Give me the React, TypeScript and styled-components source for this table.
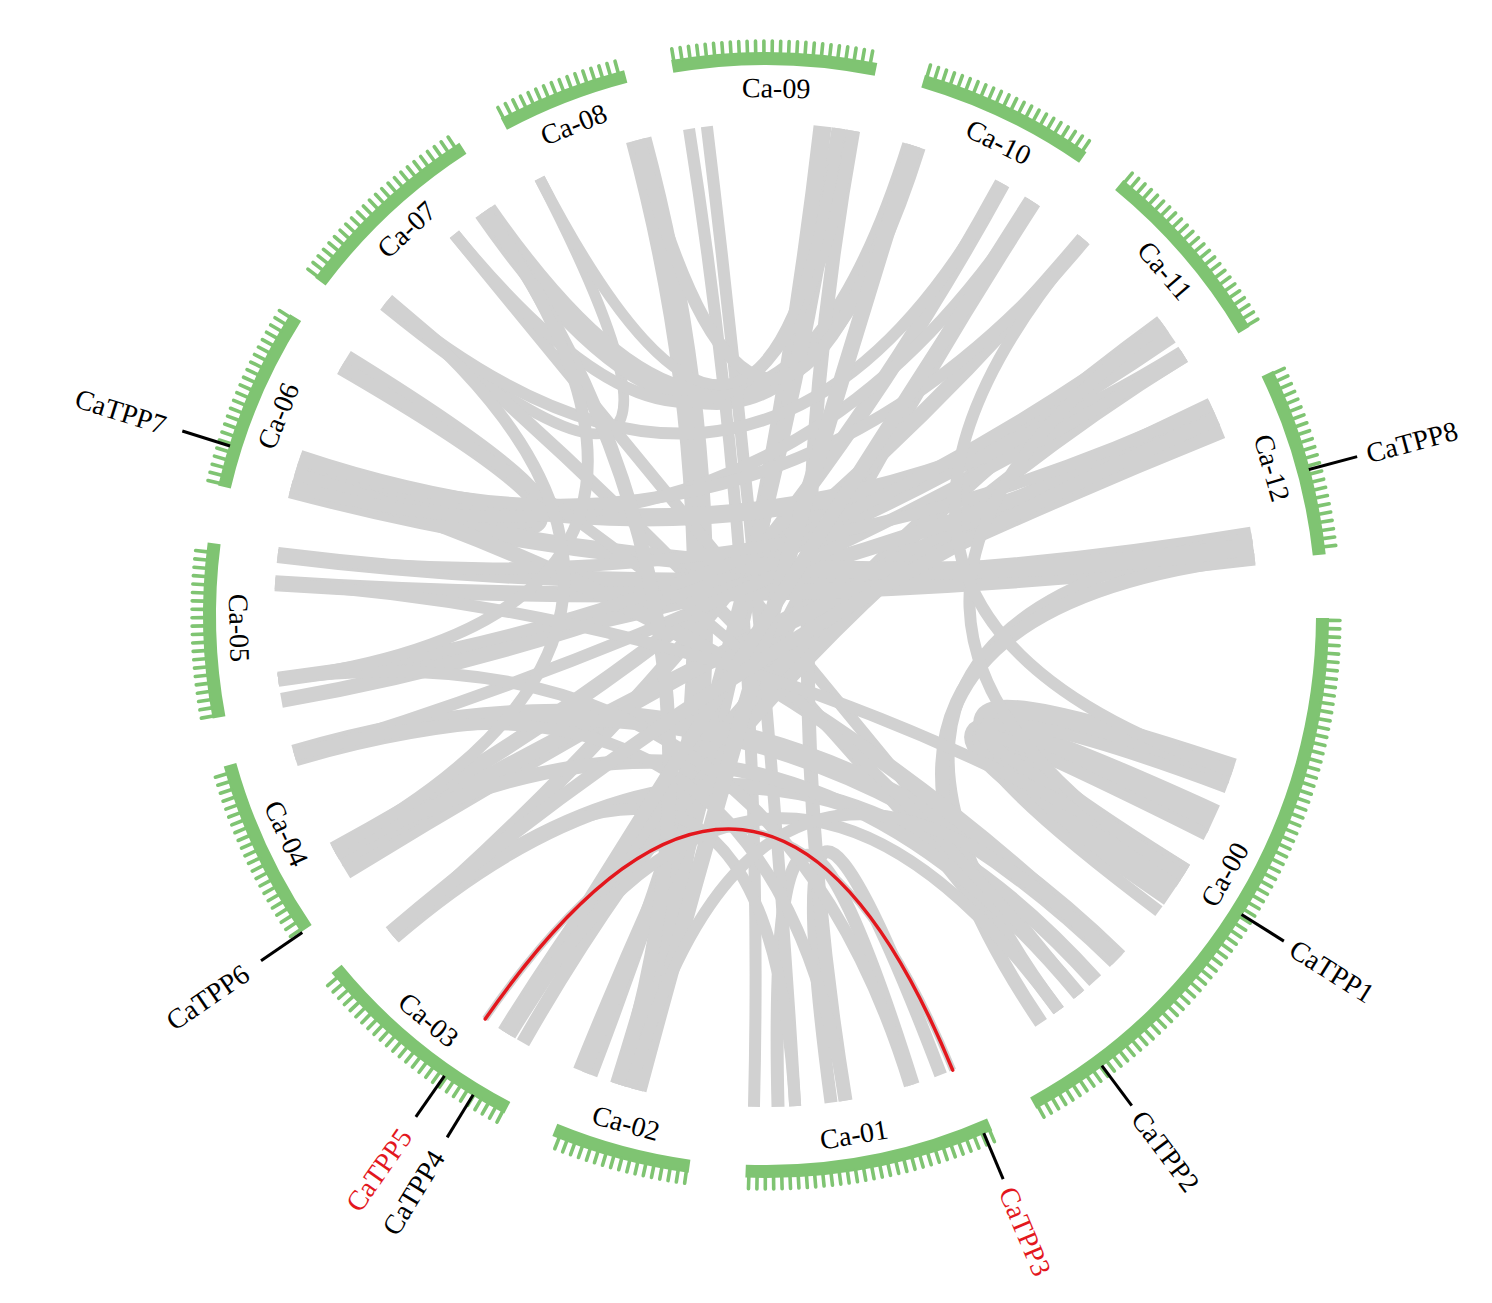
import * as React from 'react';
import styled, { createGlobalStyle } from 'styled-components';

const CX = 766;
const CY = 615;
const R_LINK = 492;
const R_BAND_IN = 550;
const R_BAND_OUT = 563;
const R_TICK = 574;
const GREEN = '#7fc472';
const GREY = '#d1d1d1';
const RED = '#e3171d';

interface Segment {
  name: string;
  start: number;
  end: number;
  label: number;
}

// a link is a bezier through the centre, drawn as a band of width w
type LinkDef = [number, number, number];

interface Gene {
  name: string;
  angle: number;
  red?: boolean;
}

const segments: Segment[] = [
  { name: 'Ca-09', start: -9.7, end: 11.4, label: 1.1 },
  { name: 'Ca-10', start: 16.4, end: 34.7, label: 26.2 },
  { name: 'Ca-11', start: 39.4, end: 59.2, label: 49.2 },
  { name: 'Ca-12', start: 64.3, end: 83.8, label: 73.8 },
  { name: 'Ca-00', start: 90.3, end: 151.3, label: 119.5 },
  { name: 'Ca-01', start: 156.3, end: 182.1, label: 170.4 },
  { name: 'Ca-02', start: 187.9, end: 202.3, label: 195.4 },
  { name: 'Ca-03', start: 207.7, end: 230.5, label: 219.8 },
  { name: 'Ca-04', start: 235.7, end: 254.4, label: 245.5 },
  { name: 'Ca-05', start: 259.4, end: 277.4, label: 268.6 },
  { name: 'Ca-06', start: 283.3, end: 302.3, label: 292.2 },
  { name: 'Ca-07', start: 306.8, end: 327, label: 317 },
  { name: 'Ca-08', start: 331.9, end: 345.4, label: 338.6 },
];

const links: LinkDef[] = [
  // Ca-06 inside itself
  [300.1, 285.0, 13],
  [301.7, 287.2, 13],
  // Ca-00 inside itself
  [108.5, 122.0, 26],
  [114.5, 124.3, 30],
  [110.5, 127.0, 12],
  [116.5, 121.2, 12],
  // Ca-01 inside itself
  [172.4, 159.2, 13],
  [178.6, 162.6, 13],
  // across the circle
  [345.0, 196.0, 26],
  [332.6, 309.0, 11],
  [325.2, 17.5, 24],
  [320.7, 140.5, 12],
  [309.8, 143.5, 13],
  [351.0, 181.4, 12],
  [353.1, 176.6, 12],
  [6.6, 197.4, 18],
  [8.6, 201.0, 16],
  [10.2, 170.7, 14],
  [28.7, 229.3, 16],
  [32.8, 202.0, 18],
  [40.2, 241.5, 16],
  [53.8, 211.8, 20],
  [58.2, 209.6, 14],
  [64.8, 238.6, 16],
  [68.0, 240.2, 16],
  [80.6, 277.0, 16],
  [83.3, 273.7, 16],
  [81.0, 143.5, 12],
  [83.2, 146.0, 14],
  [262.5, 66.4, 15],
  [260.0, 55.5, 15],
  [253.4, 134.4, 22],
  [229.2, 138.0, 16],
  [241.0, 140.5, 14],
  [284.8, 82.0, 18],
  [288.5, 58.0, 18],
  [286.5, 134.4, 16],
  // U and arch shapes round the middle
  [10.2, 320.7, 12],
  [8.6, 332.6, 11],
  [17.5, 345.0, 13],
  [28.7, 309.5, 12],
  [32.8, 285.2, 12],
  [40.2, 288.5, 12],
  [53.8, 262.5, 12],
  [58.2, 253.4, 12],
  [64.8, 277.0, 12],
  [140.5, 300.4, 11],
  [163.0, 262.5, 12],
  [170.7, 253.4, 12],
  [176.6, 229.3, 12],
  [197.4, 325.2, 14],
  [195.0, 17.5, 16],
  [211.8, 32.8, 14],
  [273.7, 121.5, 12],
  [229.8, 66.5, 14],
  [143.5, 211.8, 12],
  [134.4, 196.0, 12],
  [262.5, 325.2, 12],
  [241.5, 309.8, 12],
  [53.8, 122.0, 12],
  [40.2, 108.5, 12],
  [214.8, 157.7, 7],
];

const redLink: [number, number] = [214.8, 157.7];

const genes: Gene[] = [
  { name: 'CaTPP8', angle: 75 },
  { name: 'CaTPP7', angle: 287.5 },
  { name: 'CaTPP6', angle: 235.6 },
  { name: 'CaTPP5', angle: 214.9, red: true },
  { name: 'CaTPP4', angle: 211.4 },
  { name: 'CaTPP3', angle: 157.2, red: true },
  { name: 'CaTPP2', angle: 143.3 },
  { name: 'CaTPP1', angle: 122.2 },
];

const pt = (deg: number, r: number) => {
  const t = (deg * Math.PI) / 180;
  return { x: CX + r * Math.sin(t), y: CY - r * Math.cos(t) };
};

const xy = (deg: number, r: number) => {
  const p = pt(deg, r);
  return `${p.x.toFixed(2)} ${p.y.toFixed(2)}`;
};

const curve = (a: number, b: number) =>
  `M ${xy(a, R_LINK)} Q ${CX} ${CY} ${xy(b, R_LINK)}`;

const bandPath = (s: Segment) => {
  const big = s.end - s.start > 180 ? 1 : 0;
  return [
    `M ${xy(s.start, R_BAND_IN)}`,
    `A ${R_BAND_IN} ${R_BAND_IN} 0 ${big} 1 ${xy(s.end, R_BAND_IN)}`,
    `L ${xy(s.end, R_BAND_OUT)}`,
    `A ${R_BAND_OUT} ${R_BAND_OUT} 0 ${big} 0 ${xy(s.start, R_BAND_OUT)}`,
    'Z',
  ].join(' ');
};

const tickAngles = (s: Segment) => {
  const out: number[] = [];
  for (let t = s.start + 0.25; t <= s.end - 0.15; t += 0.84) out.push(t);
  return out;
};

const GlobalStyle = createGlobalStyle`
  html, body {
    margin: 0;
    padding: 0;
    background: #ffffff;
  }
`;

const Page = styled.div`
  width: 1492px;
  height: 1303px;
  background: #ffffff;
  overflow: hidden;
`;

const Chart = styled.svg`
  display: block;
`;

const Link = styled.path`
  fill: none;
  stroke: ${GREY};
  stroke-linecap: butt;
`;

const Highlight = styled.path`
  fill: none;
  stroke: ${RED};
  stroke-width: 3.5;
  stroke-linecap: round;
`;

const Band = styled.path`
  fill: ${GREEN};
`;

const Tick = styled.line`
  stroke: ${GREEN};
  stroke-width: 3.6;
  stroke-linecap: round;
`;

const ChromLabel = styled.text`
  font-family: 'Liberation Serif', 'Times New Roman', serif;
  font-size: 28px;
  fill: #000000;
  text-anchor: middle;
  dominant-baseline: central;
`;

const GeneLine = styled.line`
  stroke: #000000;
  stroke-width: 3;
`;

const GeneLabel = styled.text<{ $red?: boolean }>`
  font-family: 'Liberation Serif', 'Times New Roman', serif;
  font-size: 28px;
  fill: ${props => (props.$red ? RED : '#000000')};
  dominant-baseline: central;
`;

const Ring = ({ seg }: { seg: Segment }) => {
  const lbl = pt(seg.label, 527);
  const bottom = seg.label > 90 && seg.label < 270;
  const rot = bottom ? seg.label - 180 : seg.label;
  return (
    <g>
      <Band d={bandPath(seg)} />
      {tickAngles(seg).map(t => {
        const p1 = pt(t, R_BAND_OUT - 1);
        const p2 = pt(t, R_TICK);
        return <Tick key={t} x1={p1.x} y1={p1.y} x2={p2.x} y2={p2.y} />;
      })}
      <ChromLabel x={lbl.x} y={lbl.y} transform={`rotate(${rot} ${lbl.x} ${lbl.y})`}>
        {seg.name}
      </ChromLabel>
    </g>
  );
};

const GeneMark = ({ gene }: { gene: Gene }) => {
  const right = gene.angle < 180;
  const p1 = pt(gene.angle, 562);
  const p2 = pt(gene.angle, 612);
  const tp = pt(gene.angle, right ? 622 : 630);
  const rot = right ? gene.angle - 90 : gene.angle + 90;
  return (
    <g>
      <GeneLine x1={p1.x} y1={p1.y} x2={p2.x} y2={p2.y} />
      <GeneLabel
        $red={gene.red}
        x={tp.x}
        y={tp.y}
        textAnchor={right ? 'start' : 'end'}
        transform={`rotate(${rot} ${tp.x} ${tp.y})`}
      >
        {gene.name}
      </GeneLabel>
    </g>
  );
};

export default function App() {
  const [ra, rb] = redLink;
  return (
    <Page>
      <GlobalStyle />
      <Chart width={1492} height={1303} viewBox="0 0 1492 1303">
        <g>
          {links.map(([a, b, w], i) => (
            <Link key={i} d={curve(a, b)} strokeWidth={w} />
          ))}
        </g>
        <Highlight d={curve(ra, rb)} />
        {segments.map(s => (
          <Ring key={s.name} seg={s} />
        ))}
        {genes.map(g => (
          <GeneMark key={g.name} gene={g} />
        ))}
      </Chart>
    </Page>
  );
}
